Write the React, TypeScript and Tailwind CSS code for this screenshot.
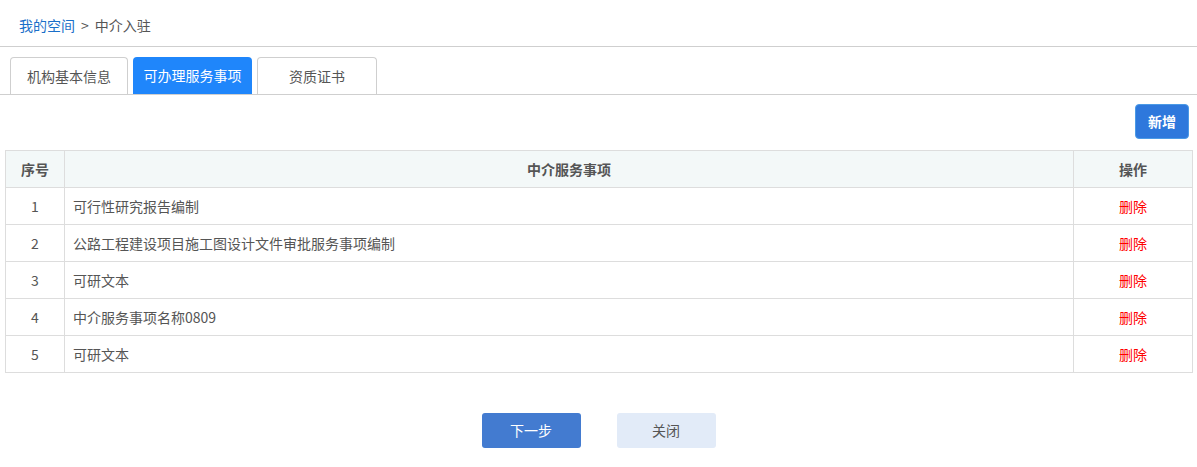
import React from "react";

const rows = [
  "可行性研究报告编制",
  "公路工程建设项目施工图设计文件审批服务事项编制",
  "可研文本",
  "中介服务事项名称0809",
  "可研文本",
];

export default function App() {
  return (
    <div
      className="w-[1197px] h-[467px] bg-white text-[#555]"
      style={{ fontFamily: '"Microsoft YaHei", "Noto Sans CJK SC", "Noto Sans", sans-serif' }}
    >
      <div className="h-[47px] border-b border-[#cfcfcf] flex items-center pl-[19px] pt-[4px] text-[14px]">
        <span className="text-[#1a6fc9]">我的空间</span>
        <span className="mx-[6px] text-[#555]">&gt;</span>
        <span className="text-[#555]">中介入驻</span>
      </div>
      <div className="flex gap-[5px] pl-[10px] pt-[10px] border-b border-[#cfcfcf]">
        <div className="w-[118px] h-[37px] border border-b-0 border-[#cfcfcf] rounded-t-[4px] flex items-center justify-center text-[14px] text-[#555]">
          机构基本信息
        </div>
        <div className="w-[119px] h-[37px] bg-[#1f86fb] rounded-t-[4px] flex items-center justify-center text-[14px] text-white">
          可办理服务事项
        </div>
        <div className="w-[120px] h-[37px] border border-b-0 border-[#cfcfcf] rounded-t-[4px] flex items-center justify-center text-[14px] text-[#555]">
          资质证书
        </div>
      </div>
      <div className="flex justify-end pr-[8px] pt-[9px]">
        <button className="w-[54px] h-[35px] bg-[#2e78dc] border border-[#4b9ae6] rounded-[4px] text-white text-[14px] font-bold">
          新增
        </button>
      </div>
      <div className="px-[5px] pt-[11px]">
        <table className="w-[1188px] border-collapse text-[14px]">
          <thead>
            <tr className="h-[37px] bg-[#f3f8f8]">
              <th className="w-[59px] border border-[#dddddd] font-bold text-[#555]">序号</th>
              <th className="border border-[#dddddd] font-bold text-[#555]">中介服务事项</th>
              <th className="w-[119px] border border-[#dddddd] font-bold text-[#555]">操作</th>
            </tr>
          </thead>
          <tbody>
            {rows.map((r, i) => (
              <tr key={i} className="h-[37px]">
                <td className="border border-[#dddddd] text-center text-[#555]">{i + 1}</td>
                <td className="border border-[#dddddd] pl-[8px] text-[#555]">{r}</td>
                <td className="border border-[#dddddd] text-center text-[#ff0000] text-[14px]">删除</td>
              </tr>
            ))}
          </tbody>
        </table>
      </div>
      <div className="flex justify-center gap-[36px] pt-[40px]">
        <button className="w-[99px] h-[35px] bg-[#437bd0] rounded-[3px] text-white text-[14px]">下一步</button>
        <button className="w-[99px] h-[35px] bg-[#e2ebf8] rounded-[3px] text-[#555] text-[14px]">关闭</button>
      </div>
    </div>
  );
}
